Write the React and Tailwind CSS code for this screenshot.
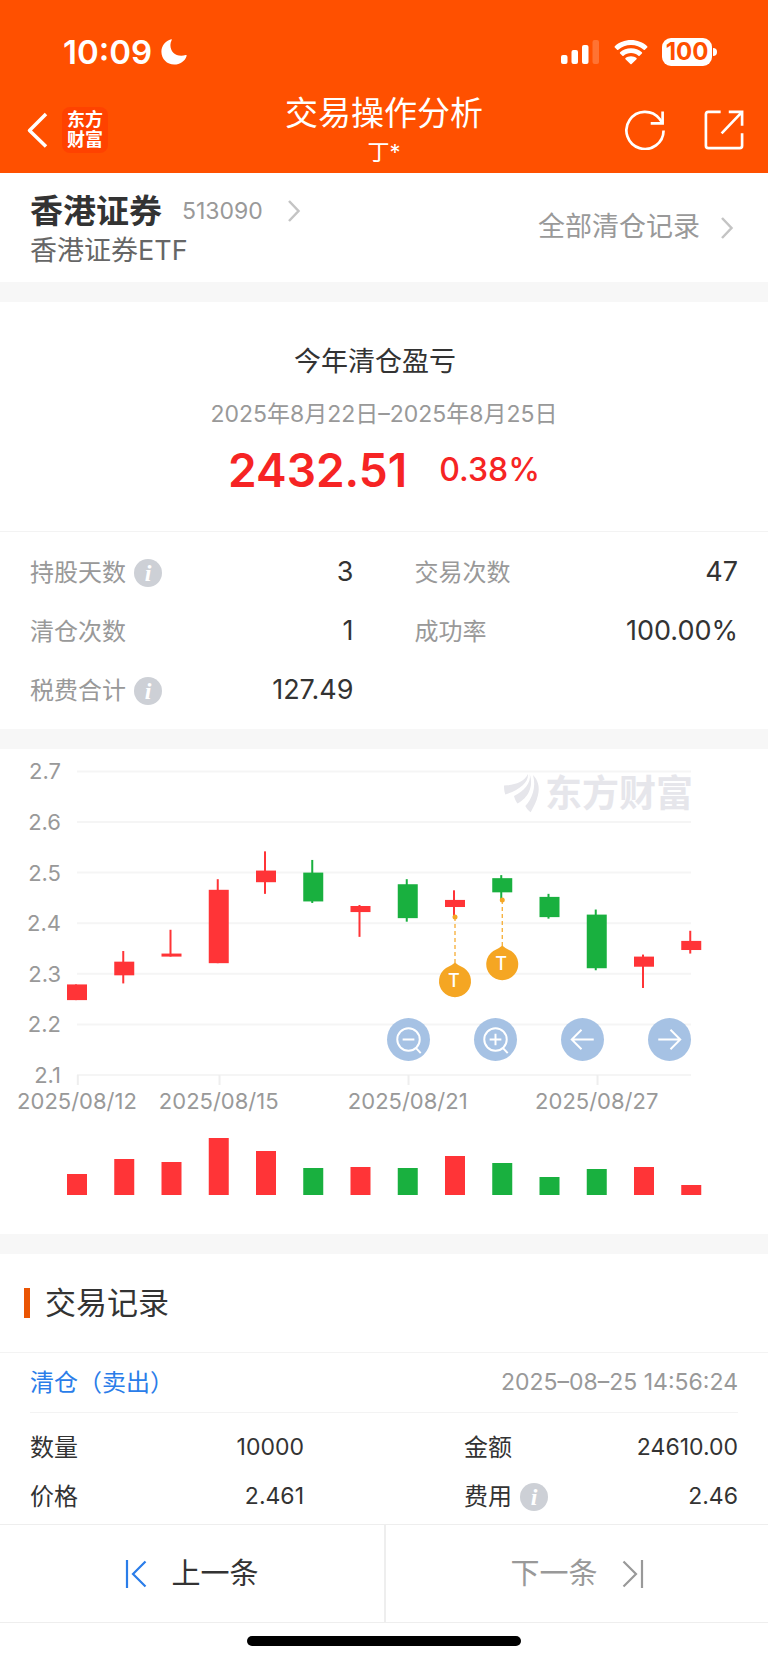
import React from "react";

const CANDLES = [
  { high: 2.279, low: 2.248, top: 2.279, bottom: 2.248, up: true, volume: 21 },
  { high: 2.345, low: 2.281, top: 2.324, bottom: 2.297, up: true, volume: 36 },
  { high: 2.387, low: 2.334, top: 2.34, bottom: 2.334, up: true, volume: 33 },
  { high: 2.487, low: 2.321, top: 2.466, bottom: 2.321, up: true, volume: 57 },
  { high: 2.542, low: 2.458, top: 2.504, bottom: 2.481, up: true, volume: 44 },
  { high: 2.525, low: 2.44, top: 2.5, bottom: 2.443, up: false, volume: 27 },
  { high: 2.436, low: 2.373, top: 2.434, bottom: 2.422, up: true, volume: 28 },
  { high: 2.487, low: 2.403, top: 2.477, bottom: 2.41, up: false, volume: 27 },
  { high: 2.465, low: 2.413, top: 2.446, bottom: 2.432, up: true, volume: 39, traded: true },
  { high: 2.495, low: 2.446, top: 2.489, bottom: 2.461, up: false, volume: 32, traded: true },
  { high: 2.458, low: 2.409, top: 2.452, bottom: 2.412, up: false, volume: 18 },
  { high: 2.427, low: 2.307, top: 2.417, bottom: 2.311, up: false, volume: 26 },
  { high: 2.338, low: 2.272, top: 2.334, bottom: 2.314, up: true, volume: 28 },
  { high: 2.385, low: 2.34, top: 2.365, bottom: 2.347, up: true, volume: 10 },
];

const PRICE_TICKS = [2.7, 2.6, 2.5, 2.4, 2.3, 2.2, 2.1];
const DATE_TICKS = [
  { index: 0, label: "2025/08/12" },
  { index: 3, label: "2025/08/15" },
  { index: 7, label: "2025/08/21" },
  { index: 11, label: "2025/08/27" },
];

const BASELINE = 326;
const xAt = (index) => 77 + index * 47.25;
const yAt = (price) => BASELINE - (price - 2.1) * 506;

function StatusBar() {
  return (
    <div className="flex h-[86px] items-center justify-between pt-[18px] pr-[51px] pl-[63px]">
      <div className="flex items-center gap-2">
        <span className="text-[33px] leading-9 font-semibold">10:09</span>
        <svg className="h-7 w-7" viewBox="0 0 28 28" fill="currentColor" aria-hidden="true">
          <path d="M11.2 1.2C5.6 2.8 1.4 7.500 1.400 13.800C1.400 21 7 26.600 14.200 26.600C20 26.600 24.800 23.300 26.600 17.900C26.800 17.200 26.300 16.800 25.700 17C24.300 17.500 22.800 17.700 21.300 17.700C14.700 17.700 10.400 13.400 10.400 7C10.400 5.200 10.900 3.600 11.700 2C12 1.400 11.800 1 11.200 1.200Z" />
        </svg>
      </div>
      <div className="flex items-center gap-[14px]">
        <svg className="h-[26px] w-10" viewBox="0 0 40 26" fill="currentColor" aria-label="信号">
          <rect x="1" y="16" width="6.500" height="9" rx="2" />
          <rect x="11.500" y="11" width="6.500" height="14" rx="2" />
          <rect x="22" y="6" width="6.500" height="19" rx="2" />
          <rect x="32.500" y="1" width="6.500" height="24" rx="2" opacity="0.2" />
        </svg>
        <svg className="h-[26px] w-[34px]" viewBox="0 0 34 26" fill="currentColor" aria-label="无线网络">
          <path d="M17 1C23.300 1 29 3.300 33.200 7.200C33.600 7.600 33.600 8.100 33.200 8.500L30.900 10.700C30.500 11 30.100 11 29.700 10.700C26.300 7.700 21.900 6 17 6C12.100 6 7.700 7.700 4.300 10.700C3.900 11 3.500 11 3.100 10.700L0.800 8.500C0.400 8.100 0.400 7.600 0.800 7.200C5 3.300 10.700 1 17 1Z" />
          <path d="M17 9.200C21.200 9.200 25 10.700 27.900 13.300C28.300 13.700 28.300 14.200 27.900 14.500L25.600 16.700C25.200 17 24.800 17 24.400 16.700C22.400 15 19.900 14 17 14C14.100 14 11.600 15 9.600 16.700C9.200 17 8.800 17 8.400 16.700L6.100 14.500C5.700 14.200 5.700 13.700 6.100 13.300C9 10.700 12.800 9.200 17 9.200Z" />
          <path d="M17 17.200C19.200 17.200 21.100 17.900 22.500 19.100C22.900 19.400 22.900 20 22.500 20.300L17.600 25C17.200 25.400 16.800 25.400 16.400 25L11.500 20.300C11.100 20 11.100 19.400 11.500 19.100C12.900 17.900 14.800 17.200 17 17.200Z" />
        </svg>
        <div className="flex items-center gap-px">
          <span className="flex h-7 w-[50px] items-center justify-center rounded-[9px] bg-white text-2xl leading-none font-bold text-[#ff5000]">
            100
          </span>
          <span className="h-2 w-1 rounded-r-full bg-white" />
        </div>
      </div>
    </div>
  );
}

function TitleBar() {
  return (
    <div className="grid h-[87px] grid-cols-[1fr_auto_1fr] items-center px-6">
      <div className="flex items-center gap-[10px]">
        <button type="button" aria-label="返回" className="py-1 pr-1 pl-[3px]">
          <svg className="h-9 w-[21px]" viewBox="0 0 21 36" fill="none" stroke="currentColor" strokeWidth="3.500" aria-hidden="true">
            <path d="M19 2L2.500 18.500L19 34.500" strokeLinejoin="round" />
          </svg>
        </button>
        <a href="#home" className="flex h-[46px] w-[46px] flex-col items-center justify-center rounded-lg bg-[#ff4200] text-[18px] leading-5 font-bold">
          <span>东方</span>
          <span>财富</span>
        </a>
      </div>
      <div className="flex flex-col items-center pt-[2px]">
        <h1 className="text-[33px] leading-[42px]">交易操作分析</h1>
        <p className="text-[22px] leading-9">丁*</p>
      </div>
      <div className="flex items-center justify-end gap-[39px]">
        <button type="button" aria-label="刷新">
          <svg className="h-10 w-10" viewBox="0 0 42 42" fill="none" stroke="currentColor" strokeWidth="2.800" aria-hidden="true">
            <path d="M40.500 21.500A19.500 19.500 0 1 1 36.200 9.200L39.500 14" />
            <path d="M39.500 1.500V14H27" />
          </svg>
        </button>
        <button type="button" aria-label="分享">
          <svg className="h-10 w-10" viewBox="0 0 42 42" fill="none" stroke="currentColor" strokeWidth="2.800" aria-hidden="true">
            <path d="M17.500 2H4.500Q2 2 2 4.500V37.500Q2 40 4.500 40H37.500Q40 40 40 37.500V24.500" />
            <path d="M26 2H40V16.500M39.500 2.500L18.500 24.500" />
          </svg>
        </button>
      </div>
    </div>
  );
}

function Chevron() {
  return (
    <svg className="h-6 w-[14px] text-[#c4c4c4]" viewBox="0 0 14 24" fill="none" stroke="currentColor" strokeWidth="2.500" aria-hidden="true">
      <path d="M2 2L11.500 12L2 22" />
    </svg>
  );
}

function InfoButton({ label }) {
  return (
    <button
      type="button"
      aria-label={label}
      className="flex h-7 w-7 items-center justify-center rounded-full bg-[#cdd0d6] font-['Liberation_Serif',serif] text-2xl leading-none font-bold text-white italic"
    >
      i
    </button>
  );
}

function StatRow({ label, value, info }) {
  return (
    <div className="flex h-[59px] items-center justify-between">
      <dt className="flex items-center gap-2 text-[24px] text-[#999999]">
        {label}
        {info && <InfoButton label={label + "说明"} />}
      </dt>
      <dd className="text-[27px] text-[#333333]">{value}</dd>
    </div>
  );
}

function RecordRow({ label, value, info }) {
  return (
    <div className="flex h-[49px] items-center justify-between">
      <dt className="flex items-center gap-2 text-[24px]">
        {label}
        {info && <InfoButton label={label + "说明"} />}
      </dt>
      <dd className="text-[23px]">{value}</dd>
    </div>
  );
}

function TradeMarker({ x, y }) {
  return (
    <g fill="#f5a623">
      <circle cx={x} cy={y} r="2.500" />
      <path d={`M${x} ${y}V${y + 46}`} stroke="#f5a623" strokeWidth="1.200" strokeDasharray="4 3" />
      <path d={`M${x} ${y + 45.500}Q${x + 3} ${y + 48.500} ${x + 9} ${y + 51}A16 16 0 1 1 ${x - 9} ${y + 51}Q${x - 3} ${y + 48.500} ${x} ${y + 45.500}Z`} />
      <text x={x - 1} y={y + 70} textAnchor="middle" className="fill-white text-[18px] font-medium">
        T
      </text>
    </g>
  );
}

function PriceChart() {
  return (
    <svg className="block h-auto w-full" viewBox="0 0 768 485" role="img" aria-label="香港证券ETF K线图">
      {PRICE_TICKS.map((price) => (
        <g key={price}>
          <path d={`M77 ${yAt(price)}H691`} stroke="#f5f5f5" strokeWidth="2" />
          <text x="61" y={yAt(price) + 8} textAnchor="end" className="fill-[#999999] text-[22px]">
            {price.toFixed(1)}
          </text>
        </g>
      ))}
      {DATE_TICKS.map(({ index, label }) => (
        <g key={label}>
          <path d={`M${xAt(index) + 0.8} ${BASELINE}v10`} stroke="#eeeeee" strokeWidth="2" />
          <text x={xAt(index)} y="360" textAnchor="middle" className="fill-[#999999] text-[22px]">
            {label}
          </text>
        </g>
      ))}
      <g className="fill-[#e6e6eb]">
        <path d="M504 36.500C514 36 524 33.500 528 25C528.500 34 519 41 505.300 45.500C504.200 42.500 504 39.500 504 36.500Z" />
        <path d="M529.700 25C531.500 34 524 42 514 47C514.800 50 516 52.500 517.500 54.500C528 49 534 38 529.700 25Z" />
        <path d="M533 26C538 31 540 38 538 46C536.500 53 533.500 58 530.700 63.300C528.500 61.500 526.500 59.500 525.300 57C532 50 536.500 38 533 26Z" />
        <text x="545" y="58" className="text-[37px] font-bold">
          东方财富
        </text>
      </g>
      {CANDLES.map((candle, index) => {
        const x = xAt(index);
        return (
          <g key={index} className={candle.up ? "fill-[#ff3437]" : "fill-[#19b03f]"}>
            <rect x={x - 2} y={yAt(candle.high)} width="2" height={yAt(candle.low) - yAt(candle.high)} />
            <rect x={x - 10} y={yAt(candle.top)} width="20" height={yAt(candle.bottom) - yAt(candle.top)} />
            <rect x={x - 10} y={446 - candle.volume} width="20" height={candle.volume} />
          </g>
        );
      })}
      {CANDLES.map((candle, index) =>
        candle.traded ? <TradeMarker key={index} x={xAt(index)} y={Math.round(yAt(candle.low))} /> : null
      )}
    </svg>
  );
}

const CHART_ACTIONS = [
  { label: "缩小", body: <path d="M22 22m-11.500 0a11.500 11.500 0 1 0 23 0a11.500 11.500 0 1 0 -23 0M29.500 30.500L34.500 36M16 22H28" /> },
  { label: "放大", body: <path d="M22 22m-11.500 0a11.500 11.500 0 1 0 23 0a11.500 11.500 0 1 0 -23 0M29.500 30.500L34.500 36M16 22H28M22 16V28" /> },
  { label: "向左", body: <path d="M33.500 22H11M21 12L11 22L21 32" /> },
  { label: "向右", body: <path d="M10.500 22H33M23 12L33 22L23 32" /> },
];

function ChartActions() {
  return (
    <div className="absolute top-[269px] right-[10%] flex gap-11">
      {CHART_ACTIONS.map(({ label, body }) => (
        <button key={label} type="button" aria-label={label} className="h-[43px] w-[43px] rounded-full bg-[#a1bfe3]/95 text-white">
          <svg className="h-[43px] w-[43px]" viewBox="0 0 44 44" fill="none" stroke="currentColor" strokeWidth="2" aria-hidden="true">
            {body}
          </svg>
        </button>
      ))}
    </div>
  );
}

export default function App() {
  return (
    <div className="min-h-screen bg-[#f7f7f7] font-['Inter','Noto_Sans_CJK_SC',sans-serif] text-[#333333]">
      <header className="bg-[#ff5000] text-white">
        <StatusBar />
        <TitleBar />
      </header>

      <main className="flex flex-col gap-5">
        <section className="flex h-[109px] items-center justify-between bg-white pr-[34px] pl-[30px]">
          <div className="pt-[5px]">
            <a href="#stock" className="flex items-center">
              <h2 className="text-[33px] leading-[42px] font-bold">香港证券</h2>
              <span className="ml-5 text-[23px] text-[#999999]">513090</span>
              <span className="ml-6">
                <Chevron />
              </span>
            </a>
            <p className="text-[27px] leading-[38px] text-[#666666]">香港证券ETF</p>
          </div>
          <a href="#history" className="flex items-center gap-[20px] text-[27px] text-[#999999]">
            全部清仓记录
            <Chevron />
          </a>
        </section>

        <section className="bg-white">
          <div className="flex h-[230px] flex-col items-center border-b border-[#f3f3f3] pt-10">
            <h2 className="pr-[18px] text-[27px] leading-10">今年清仓盈亏</h2>
            <p className="mt-3 text-[23px] leading-10 text-[#999999]">2025年8月22日–2025年8月25日</p>
            <p className="flex items-center gap-8 leading-[72px] text-[#f62424]">
              <span className="text-[46px] font-semibold">2432.51</span>
              <span className="text-[32px] font-medium">0.38%</span>
            </p>
          </div>
          <dl className="grid grid-cols-2 gap-x-[61px] px-[30px] pt-[11px] pb-[9px]">
            <StatRow label="持股天数" value="3" info />
            <StatRow label="交易次数" value="47" />
            <StatRow label="清仓次数" value="1" />
            <StatRow label="成功率" value="100.00%" />
            <StatRow label="税费合计" value="127.49" info />
          </dl>
        </section>

        <section className="relative bg-white">
          <PriceChart />
          <ChartActions />
        </section>

        <section className="bg-white">
          <div className="flex h-[99px] items-center gap-[15px] border-b border-[#f3f3f3] pl-6">
            <span className="h-[30px] w-[6px] bg-[#ea5504]" />
            <h2 className="text-[31px]">交易记录</h2>
          </div>
          <article className="px-[30px]">
            <div className="flex h-[60px] items-center justify-between border-b border-[#f3f3f3]">
              <h3 className="text-[24px] text-[#2a7de9]">清仓（卖出）</h3>
              <time className="text-[23px] text-[#999999]">2025–08–25 14:56:24</time>
            </div>
            <dl className="grid grid-cols-2 gap-x-[160px] pt-[10px] pb-[3px]">
              <RecordRow label="数量" value="10000" />
              <RecordRow label="金额" value="24610.00" />
              <RecordRow label="价格" value="2.461" />
              <RecordRow label="费用" value="2.46" info />
            </dl>
          </article>
          <nav className="grid h-[99px] grid-cols-2 border-y border-[#eeeeee]">
            <button type="button" className="flex items-center justify-center gap-6 text-[29px]">
              <svg className="h-7 w-[22px] text-[#2a7de9]" viewBox="0 0 22 28" fill="none" stroke="currentColor" strokeWidth="2.200" aria-hidden="true">
                <path d="M2 0V28M20.500 1.500L8 14L20.500 26.500" />
              </svg>
              上一条
            </button>
            <button type="button" className="flex items-center justify-center gap-6 border-l-2 border-[#eeeeee] text-[29px] text-[#999999]">
              下一条
              <svg className="h-7 w-[22px]" viewBox="0 0 22 28" fill="none" stroke="currentColor" strokeWidth="2.200" aria-hidden="true">
                <path d="M20 0V28M1.500 1.500L14 14L1.500 26.500" />
              </svg>
            </button>
          </nav>
          <div className="flex h-10 items-center justify-center pb-1">
            <span className="h-[10px] w-[274px] rounded-full bg-black" />
          </div>
        </section>
      </main>
    </div>
  );
}
